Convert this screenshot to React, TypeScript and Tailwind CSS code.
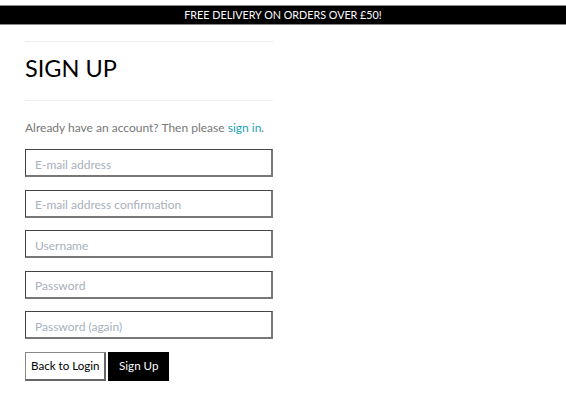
export default function App() {
  const fields = [
    { name: "email", type: "email", placeholder: "E-mail address" },
    { name: "email2", type: "email", placeholder: "E-mail address confirmation" },
    { name: "username", type: "text", placeholder: "Username" },
    { name: "password1", type: "password", placeholder: "Password" },
    { name: "password2", type: "password", placeholder: "Password (again)" },
  ];

  return (
    <div className="min-h-[413px] bg-white font-['Lato','Liberation_Sans',sans-serif] text-black">
      <div className="mt-[5px] border-y border-[#8a8a8a] bg-black py-[2px] text-center text-[10.75px] leading-[14px] text-white">
        FREE DELIVERY ON ORDERS OVER £50!
      </div>

      <div className="ml-[25px] w-[248px] pt-4">
        <div className="border-y border-[#eeeeee] pt-[14px] pb-[20px]">
          <h1 className="text-[23.5px] font-normal leading-[24px]">SIGN UP</h1>
        </div>

        <p className="mt-[20px] text-[12px] leading-[14px] text-[#777777]">
          Already have an account? Then please{" "}
          <a href="#" className="text-[#17a2b8]">
            sign in
          </a>
          .
        </p>

        <form className="mt-[14px] flex flex-col gap-[12.5px]">
          {fields.map((f) => (
            <input
              key={f.name}
              name={f.name}
              type={f.type}
              placeholder={f.placeholder}
              className="h-[28px] w-full border border-b-2 border-r-2 border-[#444444] border-b-[#777777] border-r-[#777777] px-[9px] pt-[3px] text-[12px] outline-none placeholder:text-[#a8b0bc]"
            />
          ))}
          <div className="flex gap-[2px]">
            <button
              type="button"
              className="h-[29px] border border-b-2 border-r-2 border-[#888888] border-b-[#666666] border-r-[#666666] bg-white pl-[5px] pr-[4.5px] text-[11.6px]"
            >
              Back to Login
            </button>
            <button
              type="submit"
              className="h-[29px] bg-black px-[11px] text-[11.6px] text-white"
            >
              Sign Up
            </button>
          </div>
        </form>
      </div>
    </div>
  );
}
